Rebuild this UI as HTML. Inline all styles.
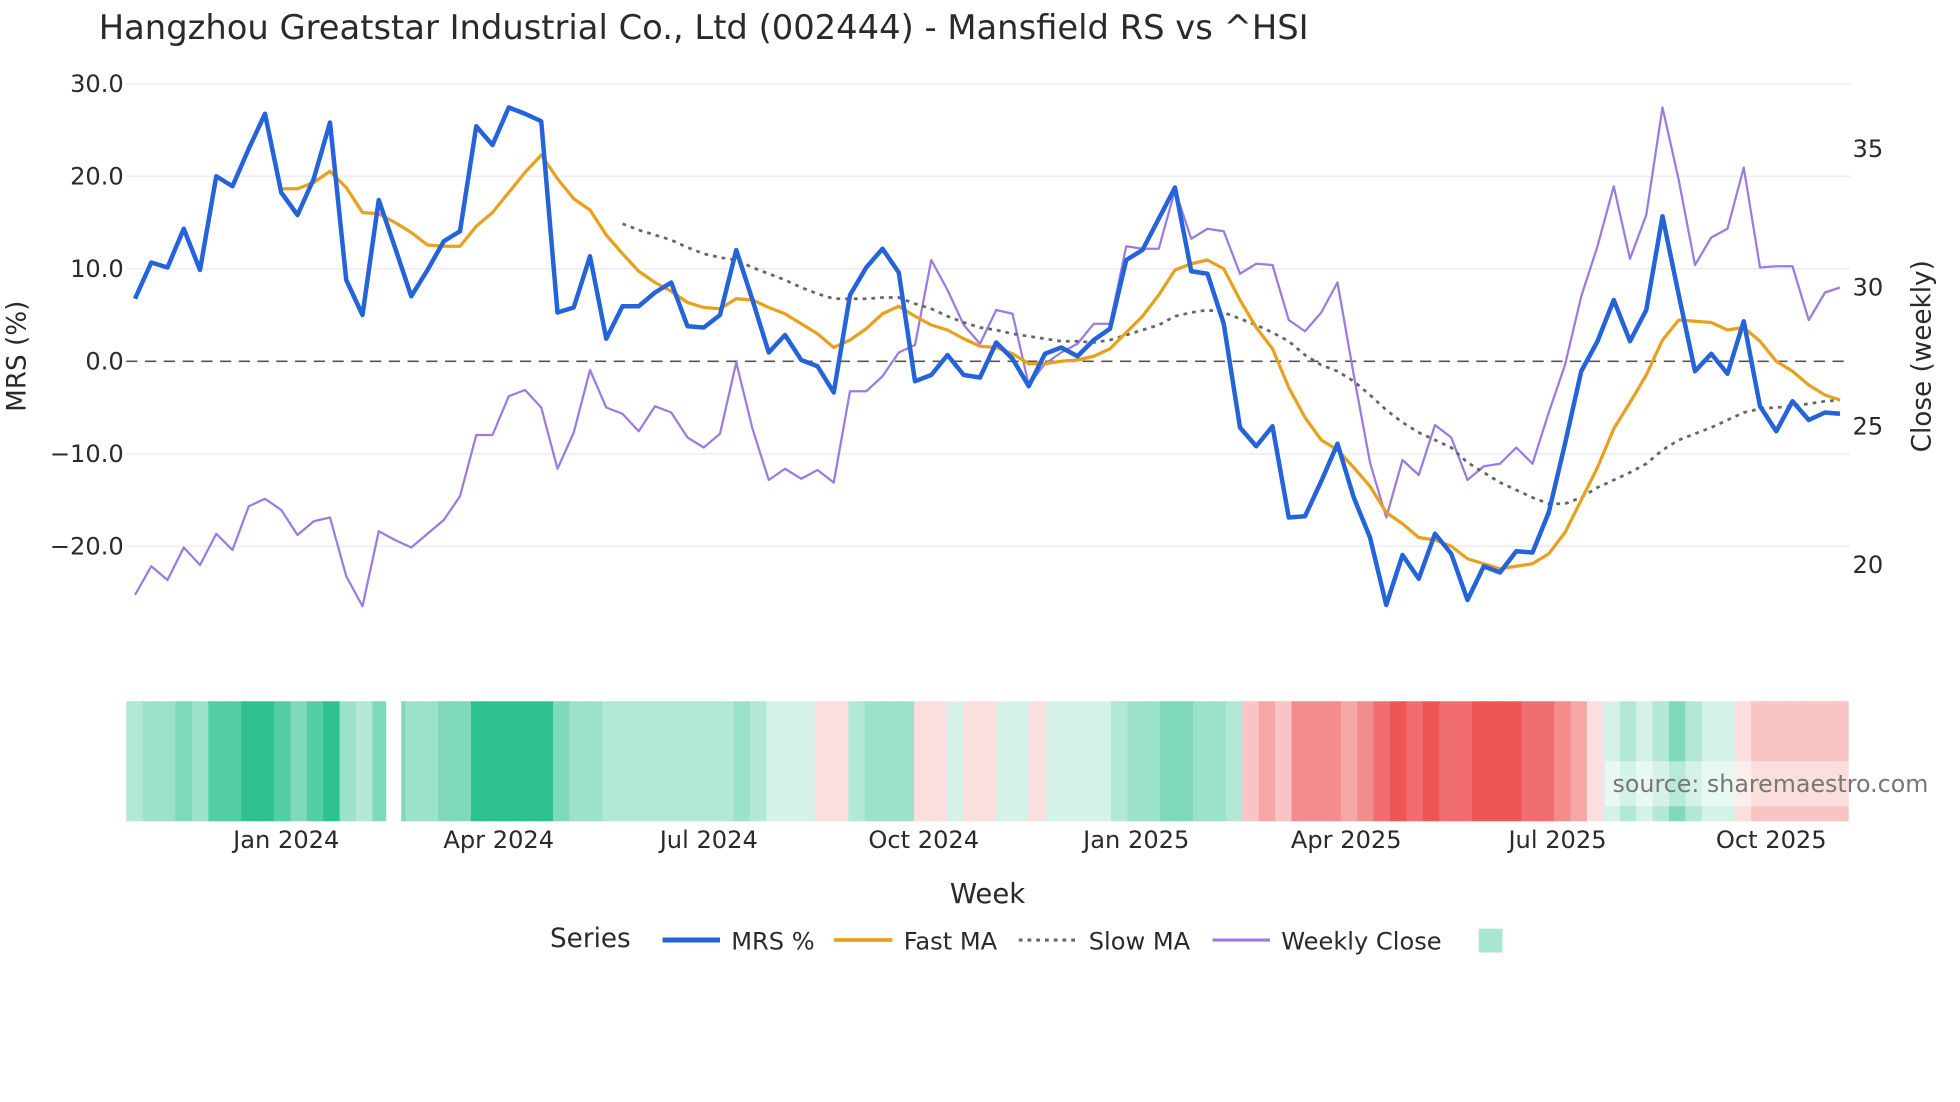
<!DOCTYPE html>
<html><head><meta charset="utf-8"><style>
html,body{margin:0;padding:0;background:#fff;}
svg{display:block;}
text{font-family:"DejaVu Sans","Liberation Sans",sans-serif;fill:#2a2a2a;}
.g1{fill:#d5f2e8}.g2{fill:#b3e8d6}.g3{fill:#9ce2ca}.g4{fill:#7fd9ba}.g5{fill:#55cda4}.g6{fill:#2fc290}
.r1{fill:#fbdede}.r2{fill:#f8c4c4}.r3{fill:#f5a6a6}.r4{fill:#f38c8c}.r5{fill:#f06e6e}.r6{fill:#ee5656}
</style></head><body>
<svg width="1960" height="1102" viewBox="0 0 1568 881.6" preserveAspectRatio="none" xmlns="http://www.w3.org/2000/svg">
<rect width="1568" height="882" fill="#fff"/>
<text x="79" y="31" font-size="27">Hangzhou Greatstar Industrial Co., Ltd (002444) - Mansfield RS vs ^HSI</text>
<g stroke="#eceef3" stroke-width="1.3">
<line x1="101" x2="1480" y1="67" y2="67"/><line x1="101" x2="1480" y1="141" y2="141"/><line x1="101" x2="1480" y1="215" y2="215"/><line x1="101" x2="1480" y1="363" y2="363"/><line x1="101" x2="1480" y1="437" y2="437"/>
</g>
<line x1="101" x2="1480" y1="289" y2="289" stroke="#555" stroke-width="1.3" stroke-dasharray="9,6"/>
<g font-size="19.3" text-anchor="end" dominant-baseline="central">
<text x="99" y="67">30.0</text><text x="99" y="141">20.0</text><text x="99" y="215">10.0</text><text x="99" y="289">0.0</text><text x="99" y="363">−10.0</text><text x="99" y="437">−20.0</text>
</g>
<g font-size="19.3" dominant-baseline="central">
<text x="1482" y="119">35</text><text x="1482" y="230">30</text><text x="1482" y="341">25</text><text x="1482" y="452">20</text>
</g>
<text transform="translate(14,285) rotate(-90)" font-size="21" text-anchor="middle" dominant-baseline="central">MRS (%)</text>
<text transform="translate(1538,285) rotate(-90)" font-size="21" text-anchor="middle" dominant-baseline="central">Close (weekly)</text>

<polyline fill="none" stroke="#9b7be0" stroke-width="1.8" stroke-linejoin="round" points="108,476 121,453 134,464 147,438 160,452 173,427 186,440 199,405 212,399 225,408 238,428 251,417 264,414 277,461 290,485 303,425 316,432 329,438 342,427 355,416 368,397 381,348 394,348 407,317 420,312 433,326 446,375 459,346 472,296 485,326 498,331 511,345 524,325 537,330 550,350 563,358 576,347 589,290 602,343 615,384 628,375 641,383 654,376 667,386 680,313 693,313 706,301 719,282 732,276 745,208 758,232 771,260 784,275 797,248 810,251 823,308 836,291 849,282 862,275 875,259 888,259 901,197 914,199 927,199 940,152 953,191 966,183 979,185 992,219 1005,211 1018,212 1031,256 1044,265 1057,250 1070,226 1083,300 1096,370 1109,414 1122,368 1135,380 1148,340 1161,350 1174,384 1187,373 1200,371 1213,358 1226,371 1239,330 1252,292 1265,237 1278,197 1291,149 1304,207 1317,172 1330,86 1343,144 1356,212 1369,190 1382,183 1395,134 1408,214 1421,213 1434,213 1447,256 1460,234 1472,230"/>
<polyline fill="none" stroke="#666" stroke-width="2.2" stroke-dasharray="3,4" points="498,179 511,184 524,188 537,192 550,198 563,203 576,206 589,208 602,214 615,219 628,224 641,230 654,235 667,239 680,239 693,239 706,238 719,238 732,243 745,247 758,253 771,258 784,262 797,264 810,267 823,269 836,271 849,273 862,273 875,274 888,272 901,268 914,264 927,260 940,253 953,250 966,248 979,250 992,255 1005,260 1018,266 1031,273 1044,284 1057,292 1070,297 1083,305 1096,316 1109,328 1122,338 1135,346 1148,352 1161,358 1174,370 1187,378 1200,386 1213,392 1226,398 1239,403 1252,403 1265,398 1278,390 1291,384 1304,378 1317,371 1330,360 1343,352 1356,347 1369,342 1382,336 1395,330 1408,327 1421,326 1434,325 1447,323 1460,321 1472,320"/>
<polyline fill="none" stroke="#e8a020" stroke-width="2.6" stroke-linejoin="round" points="225,151 238,151 251,146 264,137 277,150 290,170 303,171 316,178 329,186 342,196 355,197 368,197 381,181 394,170 407,154 420,138 433,124 446,143 459,159 472,168 485,188 498,203 511,217 524,226 537,233 550,242 563,246 576,247 589,239 602,240 615,246 628,251 641,259 654,267 667,278 680,272 693,263 706,251 719,245 732,253 745,260 758,264 771,271 784,277 797,278 810,283 823,291 836,291 849,289 862,288 875,285 888,279 901,266 914,253 927,236 940,216 953,211 966,208 979,215 992,240 1005,262 1018,279 1031,310 1044,334 1057,352 1070,360 1083,374 1096,389 1109,410 1122,419 1135,430 1148,432 1161,437 1174,447 1187,451 1200,455 1213,453 1226,451 1239,443 1252,426 1265,400 1278,374 1291,343 1304,322 1317,300 1330,272 1343,256 1356,257 1369,258 1382,264 1395,262 1408,273 1421,289 1434,297 1447,308 1460,316 1472,320"/>
<polyline fill="none" stroke="#2563d9" stroke-width="3.6" stroke-linejoin="round" points="108,239 121,210 134,214 147,183 160,216 173,141 186,149 199,119 212,91 225,154 238,172 251,143 264,98 277,224 290,252 303,160 316,198 329,237 342,216 355,193 368,185 381,101 394,116 407,86 420,91 433,97 446,250 459,246 472,205 485,271 498,245 511,245 524,234 537,226 550,261 563,262 576,252 589,200 602,240 615,282 628,268 641,288 654,293 667,314 680,236 693,214 706,199 719,218 732,305 745,300 758,284 771,300 784,302 797,274 810,287 823,309 836,283 849,278 862,285 875,272 888,263 901,208 914,200 927,175 940,150 953,217 966,219 979,259 992,342 1005,357 1018,341 1031,414 1044,413 1057,385 1070,355 1083,398 1096,430 1109,484 1122,444 1135,463 1148,427 1161,443 1174,480 1187,453 1200,458 1213,441 1226,442 1239,410 1252,355 1265,297 1278,273 1291,240 1304,273 1317,248 1330,173 1343,236 1356,297 1369,283 1382,299 1395,257 1408,325 1421,345 1434,321 1447,336 1460,330 1472,331"/>

<g transform="translate(101,561)">
<rect class="g2" x="0" width="13.6" height="96"/><rect class="g3" x="13.13" width="13.6" height="96"/><rect class="g3" x="26.26" width="13.6" height="96"/><rect class="g4" x="39.39" width="13.6" height="96"/><rect class="g3" x="52.52" width="13.6" height="96"/><rect class="g5" x="65.65" width="13.6" height="96"/><rect class="g5" x="78.78" width="13.6" height="96"/><rect class="g6" x="91.91" width="13.6" height="96"/><rect class="g6" x="105.04" width="13.6" height="96"/><rect class="g5" x="118.17" width="13.6" height="96"/>
<rect class="g4" x="131.3" width="13.6" height="96"/><rect class="g5" x="144.43" width="13.6" height="96"/><rect class="g6" x="157.56" width="13.6" height="96"/><rect class="g3" x="170.69" width="13.6" height="96"/><rect class="g2" x="183.82" width="13.6" height="96"/><rect class="g4" x="196.95" width="13.6" height="96"/><rect class="g4" x="210.08" width="13.6" height="96"/><rect class="g3" x="223.21" width="13.6" height="96"/><rect class="g3" x="236.34" width="13.6" height="96"/><rect class="g4" x="249.47" width="13.6" height="96"/>
<rect class="g4" x="262.6" width="13.6" height="96"/><rect class="g6" x="275.73" width="13.6" height="96"/><rect class="g6" x="288.86" width="13.6" height="96"/><rect class="g6" x="301.99" width="13.6" height="96"/><rect class="g6" x="315.12" width="13.6" height="96"/><rect class="g6" x="328.25" width="13.6" height="96"/><rect class="g4" x="341.38" width="13.6" height="96"/><rect class="g3" x="354.51" width="13.6" height="96"/><rect class="g3" x="367.64" width="13.6" height="96"/><rect class="g2" x="380.77" width="13.6" height="96"/>
<rect class="g2" x="393.9" width="13.6" height="96"/><rect class="g2" x="407.03" width="13.6" height="96"/><rect class="g2" x="420.16" width="13.6" height="96"/><rect class="g2" x="433.29" width="13.6" height="96"/><rect class="g2" x="446.42" width="13.6" height="96"/><rect class="g2" x="459.55" width="13.6" height="96"/><rect class="g2" x="472.68" width="13.6" height="96"/><rect class="g3" x="485.81" width="13.6" height="96"/><rect class="g2" x="498.94" width="13.6" height="96"/><rect class="g1" x="512.07" width="13.6" height="96"/>
<rect class="g1" x="525.2" width="13.6" height="96"/><rect class="g1" x="538.33" width="13.6" height="96"/><rect class="r1" x="551.46" width="13.6" height="96"/><rect class="r1" x="564.59" width="13.6" height="96"/><rect class="g2" x="577.72" width="13.6" height="96"/><rect class="g3" x="590.85" width="13.6" height="96"/><rect class="g3" x="603.98" width="13.6" height="96"/><rect class="g3" x="617.11" width="13.6" height="96"/><rect class="r1" x="630.24" width="13.6" height="96"/><rect class="r1" x="643.37" width="13.6" height="96"/>
<rect class="g1" x="656.5" width="13.6" height="96"/><rect class="r1" x="669.63" width="13.6" height="96"/><rect class="r1" x="682.76" width="13.6" height="96"/><rect class="g1" x="695.89" width="13.6" height="96"/><rect class="g1" x="709.02" width="13.6" height="96"/><rect class="r1" x="722.15" width="13.6" height="96"/><rect class="g1" x="735.28" width="13.6" height="96"/><rect class="g1" x="748.41" width="13.6" height="96"/><rect class="g1" x="761.54" width="13.6" height="96"/><rect class="g1" x="774.67" width="13.6" height="96"/>
<rect class="g2" x="787.8" width="13.6" height="96"/><rect class="g3" x="800.93" width="13.6" height="96"/><rect class="g3" x="814.06" width="13.6" height="96"/><rect class="g4" x="827.19" width="13.6" height="96"/><rect class="g4" x="840.32" width="13.6" height="96"/><rect class="g3" x="853.45" width="13.6" height="96"/><rect class="g3" x="866.58" width="13.6" height="96"/><rect class="g2" x="879.71" width="13.6" height="96"/><rect class="r2" x="892.84" width="13.6" height="96"/><rect class="r3" x="905.97" width="13.6" height="96"/>
<rect class="r2" x="919.1" width="13.6" height="96"/><rect class="r4" x="932.23" width="13.6" height="96"/><rect class="r4" x="945.36" width="13.6" height="96"/><rect class="r4" x="958.49" width="13.6" height="96"/><rect class="r3" x="971.62" width="13.6" height="96"/><rect class="r4" x="984.75" width="13.6" height="96"/><rect class="r5" x="997.88" width="13.6" height="96"/><rect class="r6" x="1011.01" width="13.6" height="96"/><rect class="r5" x="1024.14" width="13.6" height="96"/><rect class="r6" x="1037.27" width="13.6" height="96"/>
<rect class="r5" x="1050.4" width="13.6" height="96"/><rect class="r5" x="1063.53" width="13.6" height="96"/><rect class="r6" x="1076.66" width="13.6" height="96"/><rect class="r6" x="1089.79" width="13.6" height="96"/><rect class="r6" x="1102.92" width="13.6" height="96"/><rect class="r5" x="1116.05" width="13.6" height="96"/><rect class="r5" x="1129.18" width="13.6" height="96"/><rect class="r4" x="1142.31" width="13.6" height="96"/><rect class="r3" x="1155.44" width="13.6" height="96"/><rect class="r1" x="1168.57" width="13.6" height="96"/>
<rect class="g1" x="1181.7" width="13.6" height="96"/><rect class="g2" x="1194.83" width="13.6" height="96"/><rect class="g1" x="1207.96" width="13.6" height="96"/><rect class="g2" x="1221.09" width="13.6" height="96"/><rect class="g4" x="1234.22" width="13.6" height="96"/><rect class="g2" x="1247.35" width="13.6" height="96"/><rect class="g1" x="1260.48" width="13.6" height="96"/><rect class="g1" x="1273.61" width="13.6" height="96"/><rect class="r1" x="1286.74" width="13.6" height="96"/><rect class="r2" x="1299.87" width="13.6" height="96"/>
<rect class="r2" x="1313" width="13.6" height="96"/><rect class="r2" x="1326.13" width="13.6" height="96"/><rect class="r2" x="1339.26" width="13.6" height="96"/><rect class="r2" x="1352.39" width="13.6" height="96"/><rect class="r2" x="1365.52" width="13.4" height="96"/>
</g>
<rect x="1479" y="555" width="20" height="110" fill="#fff"/>
<rect x="309" y="558" width="12" height="102" fill="#fff"/>
<rect x="1284" y="609" width="196" height="36" fill="#fff" fill-opacity="0.45"/>
<text x="1290" y="627" font-size="19" style="fill:#777" dominant-baseline="central">source: sharemaestro.com</text>

<g font-size="19.3" text-anchor="middle" dominant-baseline="central">
<text x="229" y="672">Jan 2024</text><text x="399" y="672">Apr 2024</text><text x="567" y="672">Jul 2024</text><text x="739" y="672">Oct 2024</text><text x="909" y="672">Jan 2025</text><text x="1077" y="672">Apr 2025</text><text x="1246" y="672">Jul 2025</text><text x="1417" y="672">Oct 2025</text>
</g>
<text x="790" y="715" font-size="22" text-anchor="middle" dominant-baseline="central">Week</text>
<text x="440" y="751" font-size="21" dominant-baseline="central">Series</text>
<line x1="530" x2="576" y1="752" y2="752" stroke="#2563d9" stroke-width="4"/>
<text x="585" y="753" font-size="19.3" dominant-baseline="central">MRS %</text>
<line x1="667" x2="714" y1="752" y2="752" stroke="#e8a020" stroke-width="3"/>
<text x="723" y="753" font-size="19.3" dominant-baseline="central">Fast MA</text>
<line x1="815" x2="860" y1="752" y2="752" stroke="#666" stroke-width="2.5" stroke-dasharray="3,4"/>
<text x="871" y="753" font-size="19.3" dominant-baseline="central">Slow MA</text>
<line x1="970" x2="1016" y1="752" y2="752" stroke="#9b7be0" stroke-width="2.5"/>
<text x="1025" y="753" font-size="19.3" dominant-baseline="central">Weekly Close</text>
<rect x="1183" y="743" width="19" height="19" fill="#a8e6cf"/>
</svg>
</body></html>
